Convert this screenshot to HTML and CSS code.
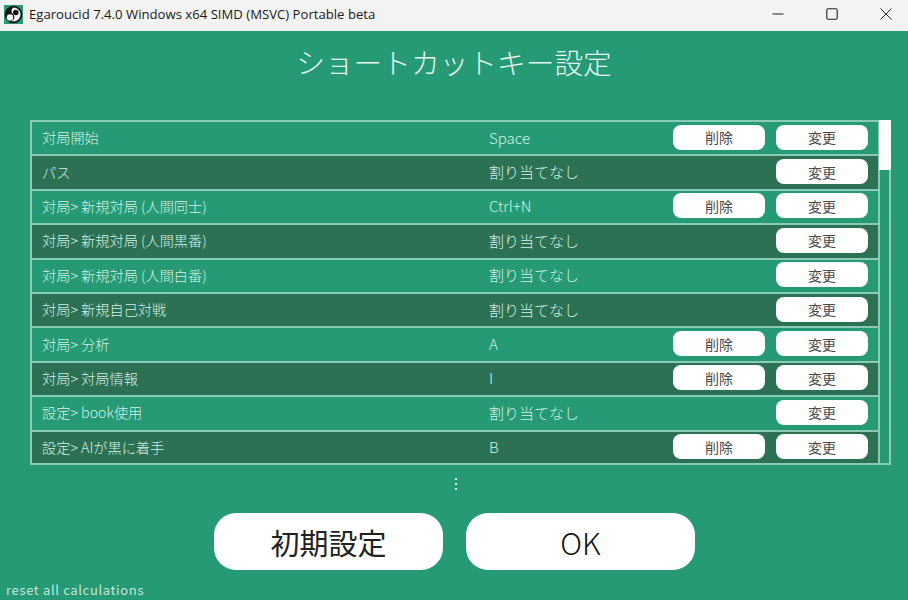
FILE: index.html
```html
<!DOCTYPE html>
<html lang="ja">
<head>
    <meta charset="UTF-8">
    <meta name="viewport" content="width=device-width, initial-scale=1.0">
    <title>Egaroucid</title>
    <link rel="stylesheet" href="styles.css">
</head>
<body>
    <div class="titlebar">
        <svg class="app-icon" width="19" height="19" viewBox="0 0 19 19">
            <rect width="19" height="19" fill="#259a74"/>
            <circle cx="9.500" cy="9.500" r="8.700" fill="#111"/>
            <path d="M9.500 2.500a7 7 0 0 1 0 14a7 7 0 0 1-2-0.500a4 4 0 0 0 2-6.500a4 4 0 0 1 0-7z" fill="#fff"/>
            <circle cx="6" cy="12.500" r="3.200" fill="#fff"/>
            <circle cx="11.800" cy="7.500" r="2.800" fill="#111"/>
        </svg>
        <span class="app-name">Egaroucid 7.4.0 Windows x64 SIMD (MSVC) Portable beta</span>
        <div class="window-btns">
            <svg width="12" height="12" viewBox="0 0 12 12"><path d="M0.500 6h11" stroke="#222" fill="none"/></svg>
            <svg width="12" height="12" viewBox="0 0 12 12"><rect x="0.800" y="0.800" width="10.400" height="10.400" rx="1.500" stroke="#222" stroke-width="1.100" fill="none"/></svg>
            <svg width="12" height="12" viewBox="0 0 12 12"><path d="M0.500 0.500l11 11M11.500 0.500l-11 11" stroke="#222" fill="none"/></svg>
        </div>
    </div>

    <div class="app">
        <h1 class="heading">ショートカットキー設定</h1>

        <div class="list-wrap">
            <div class="list">
                <div class="row">
                    <span class="row-name">対局開始</span><span class="row-key">Space</span>
                    <button class="small-btn">削除</button><button class="small-btn change">変更</button>
                </div>
                <div class="row dark">
                    <span class="row-name">パス</span><span class="row-key">割り当てなし</span>
                    <button class="small-btn change">変更</button>
                </div>
                <div class="row">
                    <span class="row-name">対局&gt; 新規対局 (人間同士)</span><span class="row-key">Ctrl+N</span>
                    <button class="small-btn">削除</button><button class="small-btn change">変更</button>
                </div>
                <div class="row dark">
                    <span class="row-name">対局&gt; 新規対局 (人間黒番)</span><span class="row-key">割り当てなし</span>
                    <button class="small-btn change">変更</button>
                </div>
                <div class="row">
                    <span class="row-name">対局&gt; 新規対局 (人間白番)</span><span class="row-key">割り当てなし</span>
                    <button class="small-btn change">変更</button>
                </div>
                <div class="row dark">
                    <span class="row-name">対局&gt; 新規自己対戦</span><span class="row-key">割り当てなし</span>
                    <button class="small-btn change">変更</button>
                </div>
                <div class="row">
                    <span class="row-name">対局&gt; 分析</span><span class="row-key">A</span>
                    <button class="small-btn">削除</button><button class="small-btn change">変更</button>
                </div>
                <div class="row dark">
                    <span class="row-name">対局&gt; 対局情報</span><span class="row-key">I</span>
                    <button class="small-btn">削除</button><button class="small-btn change">変更</button>
                </div>
                <div class="row">
                    <span class="row-name">設定&gt; book使用</span><span class="row-key">割り当てなし</span>
                    <button class="small-btn change">変更</button>
                </div>
                <div class="row dark">
                    <span class="row-name">設定&gt; AIが黒に着手</span><span class="row-key">B</span>
                    <button class="small-btn">削除</button><button class="small-btn change">変更</button>
                </div>
            </div>
            <div class="scrollbar"><div class="thumb"></div></div>
        </div>

        <div class="more-dots"><i></i><i></i><i></i></div>

        <div class="actions">
            <button class="big-btn">初期設定</button>
            <button class="big-btn ok">OK</button>
        </div>

        <div class="footnote">reset all calculations</div>
    </div>
</body>
</html>
```

FILE: styles.css
```css
body {
    margin: 0;
    width: 908px;
    height: 600px;
    overflow: hidden;
    font-family: "Noto Sans CJK JP", "Noto Sans", sans-serif;
    background-color: #259a74;
}
.titlebar {
    height: 31px;
    background-color: #f3f3f3;
    display: flex;
    align-items: center;
    padding-left: 4px;
    padding-bottom: 3px;
    box-sizing: border-box;
}
.app-icon {
    flex: none;
}
.app-name {
    margin-left: 6px;
    font-family: "Open Sans", sans-serif;
    font-size: 13.15px;
    color: #1a1a1a;
}
.window-btns {
    margin-left: auto;
    display: flex;
    gap: 42px;
    padding-right: 16px;
}
.app {
    position: relative;
    height: 569px;
}
.heading {
    margin: 0;
    padding-top: 11px;
    height: 89px;
    box-sizing: border-box;
    text-align: center;
    font-size: 28.7px;
    line-height: 40px;
    font-weight: 300;
    color: #e6f4ef;
}
.list-wrap {
    margin-left: 30px;
    width: 861px;
    height: 345px;
    display: flex;
}
.list {
    width: 850px;
}
.row {
    height: 34.4px;
    box-sizing: border-box;
    border: 2px solid #8acbb6;
    border-bottom-width: 0;
    display: flex;
    align-items: center;
    font-size: 14.2px;
    font-weight: 300;
    color: #d6efe6;
    padding-right: 10px;
    padding-bottom: 2px;
}
.row:last-child {
    height: 35.4px;
    border-bottom-width: 2px;
    padding-bottom: 1px;
}
.row.dark {
    background-color: #2d7155;
}
.row-name {
    width: 457px;
    padding-left: 10px;
    box-sizing: border-box;
    flex: none;
}
.row-key {
    flex: 1;
    font-size: 15px;
}
.small-btn {
    width: 92px;
    height: 25px;
    padding: 0;
    border: none;
    border-radius: 8px;
    background-color: #fff;
    color: #4a4a4a;
    font-family: inherit;
    font-size: 14px;
}
.small-btn.change {
    margin-left: 11px;
}
.scrollbar {
    width: 11px;
    box-sizing: border-box;
    border: 2px solid #8acbb6;
    border-width: 0 2px 2px 0;
}
.thumb {
    height: 50px;
    margin: 0 -2px 0 -1px;
    background-color: #fff;
}
.more-dots {
    height: 48px;
    display: flex;
    flex-direction: column;
    align-items: center;
    gap: 3px;
    padding: 13px 0 0 3px;
    box-sizing: border-box;
}
.more-dots i {
    width: 2px;
    height: 2px;
    background-color: #e6f4ef;
}
.actions {
    display: flex;
    gap: 23px;
    padding-left: 214px;
}
.big-btn {
    width: 229px;
    height: 57px;
    padding: 0;
    border: none;
    border-radius: 22px;
    background-color: #fff;
    color: #222;
    font-family: inherit;
    font-size: 29px;
}
.big-btn.ok {
    font-size: 30px;
    font-weight: 300;
    color: #111;
}
.footnote {
    margin: 12px 0 0 6px;
    font-size: 13px;
    line-height: 16px;
    letter-spacing: 0.65px;
    color: #c5e6da;
}
```
